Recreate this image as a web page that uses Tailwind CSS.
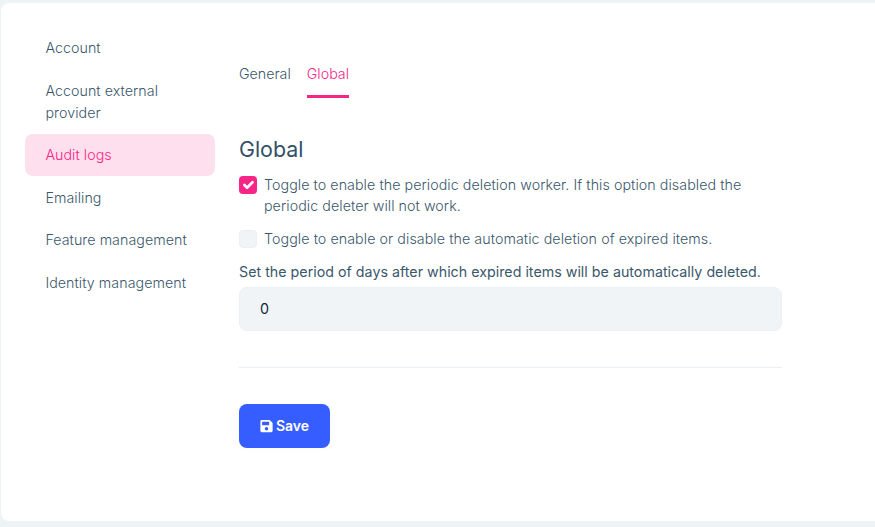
<!DOCTYPE html>
<html lang="en">
<head>
<meta charset="utf-8">
<title>Settings</title>
<script src="https://cdn.jsdelivr.net/npm/@tailwindcss/browser@4"></script>
</head>
<body class="h-[527px] overflow-hidden bg-[#eef3f6] pt-[3px] pl-px font-['Inter',sans-serif] text-[14.25px] leading-[21.375px] text-[#3a576b]">
<main class="flex h-[518px] rounded-l-[8px] bg-white pl-[24.4px]">
  <nav class="w-[189.6px] shrink-0 pt-[23px] font-light tracking-[0.05px]">
    <a class="block px-5 py-[11px] leading-[21px]">Account</a>
    <a class="block px-5 pt-[11px] pb-[10px] leading-[22px]">Account external provider</a>
    <a class="block rounded-[8px] bg-[#fedfed] px-5 pt-[10px] pb-[11px] leading-[21px] text-[#f72585]">Audit logs</a>
    <a class="block px-5 py-[11px] leading-[21px]">Emailing</a>
    <a class="block px-5 pt-[10px] pb-[11px] leading-[21px]">Feature management</a>
    <a class="block px-5 py-[11px] leading-[21px]">Identity management</a>
  </nav>
  <section class="ml-6 w-[543px] pt-[60px]">
    <div class="flex h-[35px] gap-4 font-light">
      <a>General</a>
      <a class="border-b-[3px] border-[#f72585] text-[#f72585]">Global</a>
    </div>
    <h2 class="mt-[37px] text-[21.4px] leading-[28px] font-normal text-[#325168]">Global</h2>
    <div class="mt-[11px] flex gap-[7px] font-light tracking-[0.06px]">
      <span class="mt-[2px] flex size-[18px] shrink-0 items-center justify-center rounded-[4px] bg-[#f72585]">
        <svg class="size-[18px]" viewBox="0 0 20 20" fill="none" stroke="#fff" stroke-linecap="round" stroke-linejoin="round" stroke-width="3"><path d="m6 10 3 3 6-6"/></svg>
      </span>
      <span>Toggle to enable the periodic deletion worker. If this option disabled the periodic deleter will not work.</span>
    </div>
    <div class="mt-[11px] flex gap-[7px] font-light tracking-[0.07px]">
      <span class="mt-[2px] size-[18px] shrink-0 rounded-[4px] border border-[#ebf0f4] bg-[#f0f4f7]"></span>
      <span>Toggle to enable or disable the automatic deletion of expired items.</span>
    </div>
    <div class="mt-[12px] leading-[21px] tracking-[0.01px]">Set the period of days after which expired items will be automatically deleted.</div>
    <div class="mt-[5px] flex h-[44px] items-center rounded-[8px] border border-[#ebf0f4] bg-[#f0f4f7] px-5 text-[#0c2a3c]">0</div>
    <div class="mt-[36px] border-t border-[#e9eff2]"></div>
    <button class="mt-[36px] flex h-[44px] w-[91px] items-center justify-center gap-[3px] rounded-[8px] bg-[#355dff] text-[14px] font-semibold text-white shadow-[0_0_12px_rgba(0,0,0,0.02)]">
      <svg class="h-[14px] w-[13px]" viewBox="0 0 448 512" fill="#fff"><path fill-rule="evenodd" d="M433.9 129.9l-83.900-83.900A48 48 0 0 0 316.100 32H48C21.500 32 0 53.500 0 80v352c0 26.500 21.500 48 48 48h352c26.500 0 48-21.500 48-48V163.900a48 48 0 0 0-14.100-34zM224 416a64 64 0 1 1 0-128 64 64 0 0 1 0 128zM320 111.500V212c0 6.600-5.400 12-12 12H76c-6.600 0-12-5.400-12-12V108c0-6.600 5.400-12 12-12h228.500c3.200 0 6.200 1.300 8.500 3.500l3.500 3.500a12 12 0 0 1 3.500 8.500z"/></svg>
      <span>Save</span>
    </button>
  </section>
</main>
</body>
</html>
